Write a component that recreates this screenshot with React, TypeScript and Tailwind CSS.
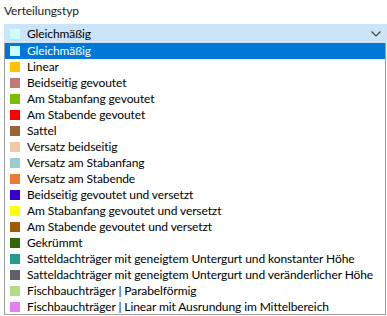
import React from "react";

const items: [string, string][] = [
  ["Gleichmäßig", "#ccffff"],
  ["Linear", "#ffc000"],
  ["Beidseitig gevoutet", "#c07878"],
  ["Am Stabanfang gevoutet", "#80bc00"],
  ["Am Stabende gevoutet", "#ff0000"],
  ["Sattel", "#996633"],
  ["Versatz beidseitig", "#f0c8a4"],
  ["Versatz am Stabanfang", "#99cccc"],
  ["Versatz am Stabende", "#f07838"],
  ["Beidseitig gevoutet und versetzt", "#3300cc"],
  ["Am Stabanfang gevoutet und versetzt", "#ffff00"],
  ["Am Stabende gevoutet und versetzt", "#a05a00"],
  ["Gekrümmt", "#336600"],
  ["Satteldachträger mit geneigtem Untergurt und konstanter Höhe", "#279a90"],
  ["Satteldachträger mit geneigtem Untergurt und veränderlicher Höhe", "#606068"],
  ["Fischbauchträger | Parabelförmig", "#b4dc84"],
  ["Fischbauchträger | Linear mit Ausrundung im Mittelbereich", "#e080f4"],
];

export default function App() {
  return (
    <div
      className="w-[387px] h-[316px] bg-white overflow-hidden text-[12px] text-black tracking-[-0.1px]"
      style={{ fontFamily: 'Lato, "Noto Sans", sans-serif' }}
    >
      <div className="h-[24px] pl-[4px] pt-[3px] text-[#1a1a1a] leading-[16px]">Verteilungstyp</div>
      <div className="ml-[4px] h-[19px] bg-[#cce4f7] flex items-center pl-[6px] pr-[6px]">
        <span className="w-[10px] h-[10px] mr-[7px]" style={{ background: "#ccffff" }} />
        <span className="flex-1 leading-[16px]">Gleichmäßig</span>
        <svg width="10" height="6" viewBox="0 0 10 6">
          <path d="M0.5 0.5 L5 5 L9.5 0.5" fill="none" stroke="#444" strokeWidth="1.2" />
        </svg>
      </div>
      <div className="ml-[4px] w-[382px] h-[272px] border-l border-r border-b border-[#a0a0a0] flex flex-col">
        {items.map(([label, color], i) => (
          <div
            key={label}
            className={
              "h-[16px] flex items-center pl-[5px] whitespace-nowrap leading-[16px] " +
              (i === 0 ? "bg-[#0078d7] text-white" : "")
            }
          >
            <span className="w-[10px] h-[10px] mr-[7px] shrink-0" style={{ background: color }} />
            <span>{label}</span>
          </div>
        ))}
      </div>
    </div>
  );
}
